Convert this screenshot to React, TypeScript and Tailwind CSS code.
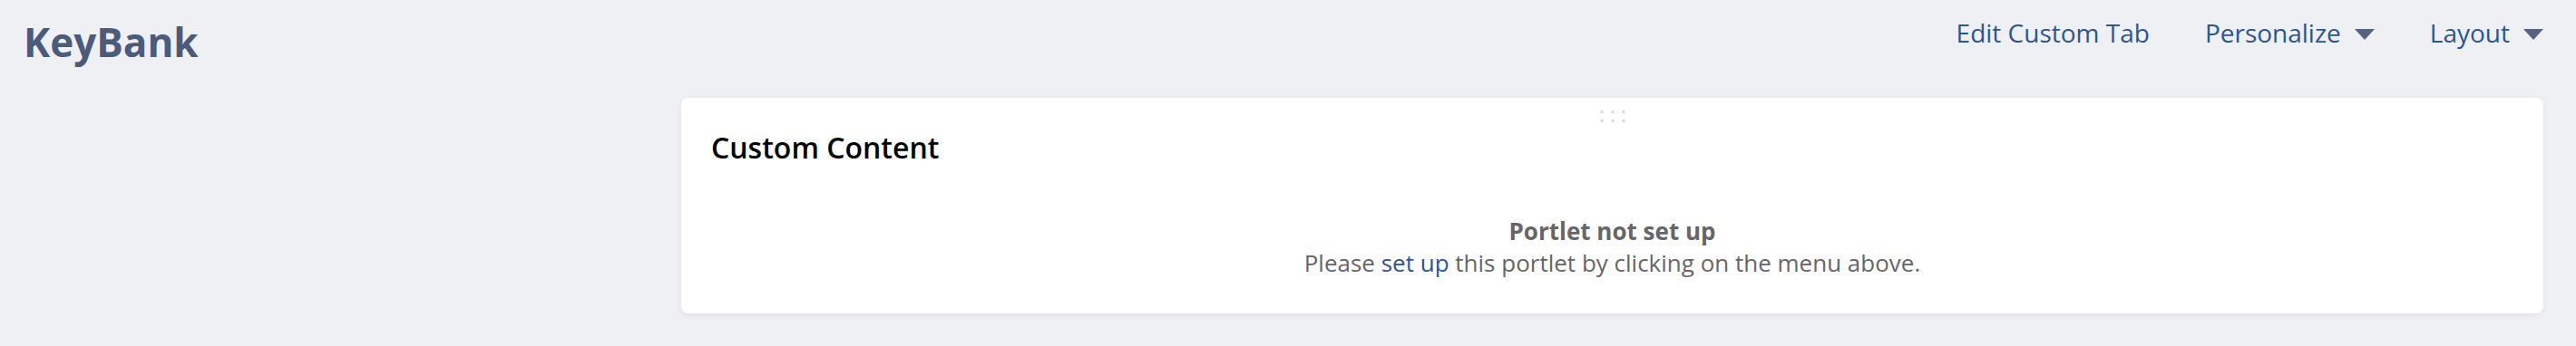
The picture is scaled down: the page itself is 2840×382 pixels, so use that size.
import React from "react";

const Caret = () => (
  <svg width="22" height="12" viewBox="0 0 22 12" className="ml-[15px] mt-[3px]">
    <polygon points="0,0 22,0 11,12" fill="#56627f" />
  </svg>
);

export default function App() {
  return (
    <div
      className="w-full h-[382px] bg-[#eff0f4] overflow-hidden"
      style={{ fontFamily: '"Open Sans", "Noto Sans", sans-serif' }}
    >
      <header className="flex items-start justify-between pl-[26px] pr-[36px] pt-[18px] h-[108px]">
        <div className="text-[44px] leading-[56px] font-bold text-[#4b5b79]">KeyBank</div>
        <nav className="flex items-center gap-[61px] text-[28px] leading-[40px] text-[#2c5592] -mt-[2px]">
          <a className="cursor-pointer">Edit Custom Tab</a>
          <a className="flex items-center cursor-pointer">
            Personalize
            <Caret />
          </a>
          <a className="flex items-center cursor-pointer">
            Layout
            <Caret />
          </a>
        </nav>
      </header>
      <div className="pl-[751px] pr-[36px]">
        <section className="relative bg-white rounded-[8px] h-[238px] shadow-[0_2px_8px_rgba(0,0,0,0.06)] px-[33px]">
          <div className="absolute left-1/2 top-[14px] -translate-x-1/2 grid grid-cols-3 gap-x-[9px] gap-y-[7px]">
            {Array.from({ length: 6 }).map((_, i) => (
              <span key={i} className="w-[3px] h-[3px] bg-[#d9d9d9]" />
            ))}
          </div>
          <h2 className="pt-[35px] text-[32px] leading-[40px] font-semibold text-black">Custom Content</h2>
          <div className="mt-[55px] text-center text-[26px] leading-[35px] text-[#666666]">
            <div className="font-bold">Portlet not set up</div>
            <div>
              Please <a className="text-[#2c5592] cursor-pointer">set up</a> this portlet by clicking on the menu above.
            </div>
          </div>
        </section>
      </div>
    </div>
  );
}
